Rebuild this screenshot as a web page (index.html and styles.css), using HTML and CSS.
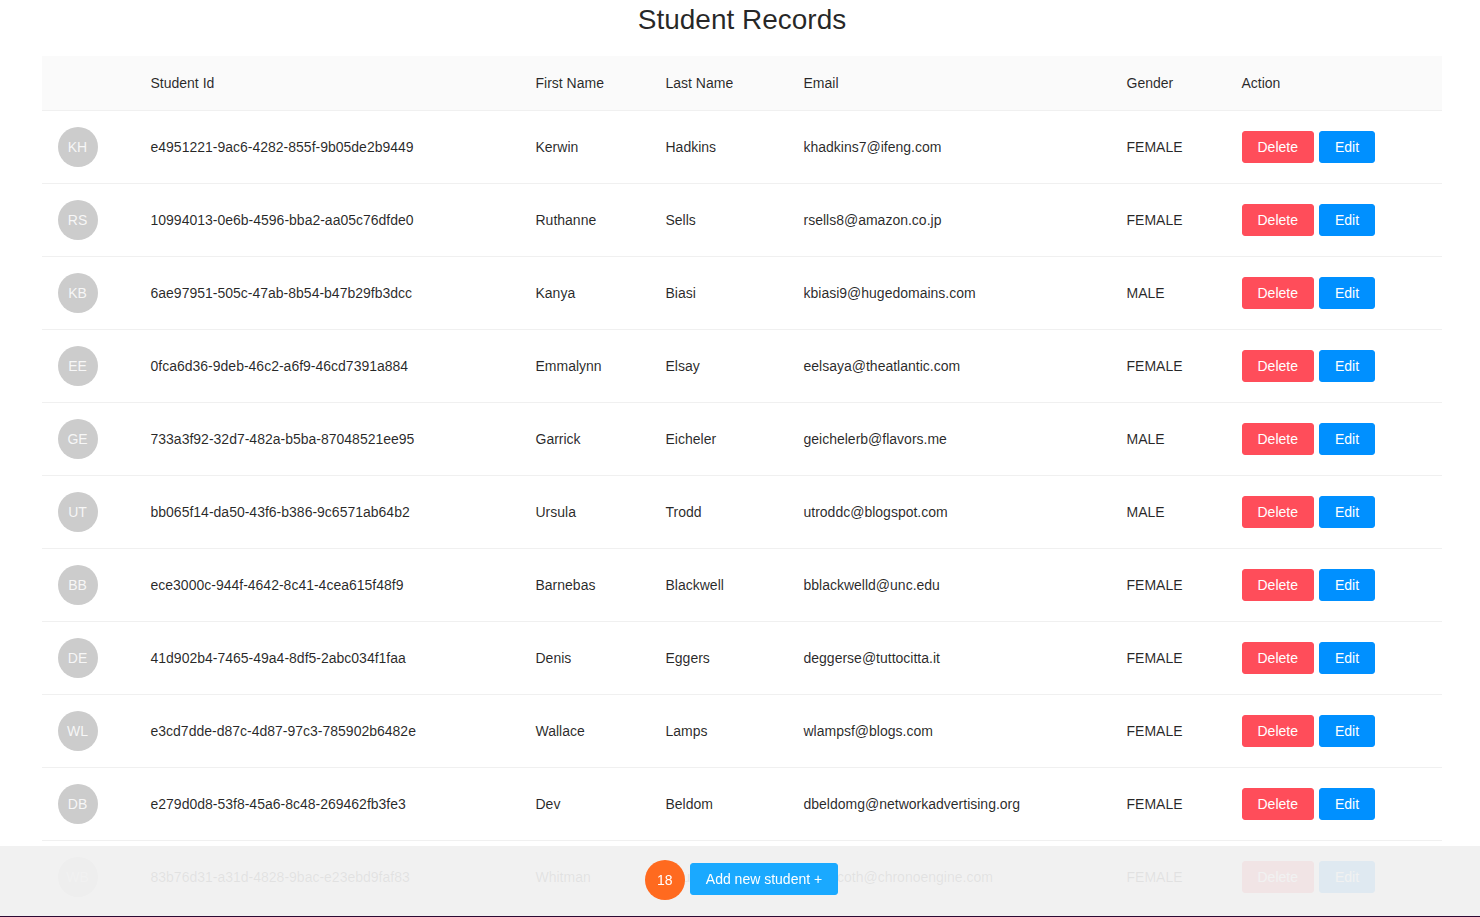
FILE: index.html
```html
<!DOCTYPE html>
<html lang="en">
  <head>
    <meta charset="UTF-8" />
    <title>Student Records</title>
    <link rel="stylesheet" href="styles.css">
  </head>
  <body>
    <h1 class="title">Student Records</h1>
    <table class="records">
      <colgroup>
        <col class="col-avatar" />
        <col class="col-id" />
        <col class="col-first" />
        <col class="col-last" />
        <col class="col-email" />
        <col class="col-gender" />
        <col class="col-action" />
      </colgroup>
      <thead>
        <tr>
          <th></th>
          <th>Student Id</th>
          <th>First Name</th>
          <th>Last Name</th>
          <th>Email</th>
          <th>Gender</th>
          <th>Action</th>
        </tr>
      </thead>
      <tbody>
        <tr>
          <td><span class="avatar">KH</span></td>
          <td>e4951221-9ac6-4282-855f-9b05de2b9449</td>
          <td>Kerwin</td>
          <td>Hadkins</td>
          <td>khadkins7@ifeng.com</td>
          <td>FEMALE</td>
          <td class="actions"><button class="btn btn-danger">Delete</button><button class="btn btn-primary">Edit</button></td>
        </tr>
        <tr>
          <td><span class="avatar">RS</span></td>
          <td>10994013-0e6b-4596-bba2-aa05c76dfde0</td>
          <td>Ruthanne</td>
          <td>Sells</td>
          <td>rsells8@amazon.co.jp</td>
          <td>FEMALE</td>
          <td class="actions"><button class="btn btn-danger">Delete</button><button class="btn btn-primary">Edit</button></td>
        </tr>
        <tr>
          <td><span class="avatar">KB</span></td>
          <td>6ae97951-505c-47ab-8b54-b47b29fb3dcc</td>
          <td>Kanya</td>
          <td>Biasi</td>
          <td>kbiasi9@hugedomains.com</td>
          <td>MALE</td>
          <td class="actions"><button class="btn btn-danger">Delete</button><button class="btn btn-primary">Edit</button></td>
        </tr>
        <tr>
          <td><span class="avatar">EE</span></td>
          <td>0fca6d36-9deb-46c2-a6f9-46cd7391a884</td>
          <td>Emmalynn</td>
          <td>Elsay</td>
          <td>eelsaya@theatlantic.com</td>
          <td>FEMALE</td>
          <td class="actions"><button class="btn btn-danger">Delete</button><button class="btn btn-primary">Edit</button></td>
        </tr>
        <tr>
          <td><span class="avatar">GE</span></td>
          <td>733a3f92-32d7-482a-b5ba-87048521ee95</td>
          <td>Garrick</td>
          <td>Eicheler</td>
          <td>geichelerb@flavors.me</td>
          <td>MALE</td>
          <td class="actions"><button class="btn btn-danger">Delete</button><button class="btn btn-primary">Edit</button></td>
        </tr>
        <tr>
          <td><span class="avatar">UT</span></td>
          <td>bb065f14-da50-43f6-b386-9c6571ab64b2</td>
          <td>Ursula</td>
          <td>Trodd</td>
          <td>utroddc@blogspot.com</td>
          <td>MALE</td>
          <td class="actions"><button class="btn btn-danger">Delete</button><button class="btn btn-primary">Edit</button></td>
        </tr>
        <tr>
          <td><span class="avatar">BB</span></td>
          <td>ece3000c-944f-4642-8c41-4cea615f48f9</td>
          <td>Barnebas</td>
          <td>Blackwell</td>
          <td>bblackwelld@unc.edu</td>
          <td>FEMALE</td>
          <td class="actions"><button class="btn btn-danger">Delete</button><button class="btn btn-primary">Edit</button></td>
        </tr>
        <tr>
          <td><span class="avatar">DE</span></td>
          <td>41d902b4-7465-49a4-8df5-2abc034f1faa</td>
          <td>Denis</td>
          <td>Eggers</td>
          <td>deggerse@tuttocitta.it</td>
          <td>FEMALE</td>
          <td class="actions"><button class="btn btn-danger">Delete</button><button class="btn btn-primary">Edit</button></td>
        </tr>
        <tr>
          <td><span class="avatar">WL</span></td>
          <td>e3cd7dde-d87c-4d87-97c3-785902b6482e</td>
          <td>Wallace</td>
          <td>Lamps</td>
          <td>wlampsf@blogs.com</td>
          <td>FEMALE</td>
          <td class="actions"><button class="btn btn-danger">Delete</button><button class="btn btn-primary">Edit</button></td>
        </tr>
        <tr>
          <td><span class="avatar">DB</span></td>
          <td>e279d0d8-53f8-45a6-8c48-269462fb3fe3</td>
          <td>Dev</td>
          <td>Beldom</td>
          <td>dbeldomg@networkadvertising.org</td>
          <td>FEMALE</td>
          <td class="actions"><button class="btn btn-danger">Delete</button><button class="btn btn-primary">Edit</button></td>
        </tr>
        <tr>
          <td><span class="avatar">WB</span></td>
          <td>83b76d31-a31d-4828-9bac-e23ebd9faf83</td>
          <td>Whitman</td>
          <td>Baucoth</td>
          <td>wbaucoth@chronoengine.com</td>
          <td>FEMALE</td>
          <td class="actions"><button class="btn btn-danger">Delete</button><button class="btn btn-primary">Edit</button></td>
        </tr>
      </tbody>
    </table>
    <div class="footer">
      <span class="count">18</span>
      <button class="btn btn-add">Add new student +</button>
    </div>
  </body>
</html>
```

FILE: styles.css
```css
html {
  height: 100%;
  overflow: hidden;
}

body {
  margin: 0;
  padding: 0 38px 0 42px;
  font: 14px "Liberation Sans", Arial, sans-serif;
  color: rgba(0, 0, 0, 0.85);
  background: #fff;
}

.title {
  margin: 0;
  height: 56px;
  padding-top: 2px;
  box-sizing: border-box;
  font-size: 28px;
  font-weight: 400;
  line-height: 36px;
  text-align: center;
}

.records {
  width: 1400px;
  table-layout: fixed;
  border-collapse: separate;
  border-spacing: 0;
}

.col-avatar {
  width: 92.5px;
}

.col-id {
  width: 385px;
}

.col-first {
  width: 130px;
}

.col-last {
  width: 138px;
}

.col-email {
  width: 323px;
}

.col-gender {
  width: 115px;
}

.col-action {
  width: 216.5px;
}

th,
td {
  padding: 0 16px;
  text-align: left;
  font-weight: 400;
  border-bottom: 1px solid #f0f0f0;
}

th {
  height: 54px;
  background: #fafafa;
}

td {
  height: 72px;
}

.avatar {
  display: flex;
  align-items: center;
  justify-content: center;
  width: 40px;
  height: 40px;
  padding-right: 1px;
  box-sizing: border-box;
  border-radius: 50%;
  background: #ccc;
  color: rgba(255, 255, 255, 0.85);
}

.btn {
  height: 32px;
  padding: 0 15px;
  border: 1px solid transparent;
  border-radius: 3px;
  font: inherit;
  color: #fff;
}

.btn-danger {
  margin-right: 5px;
  background: #ff4d5a;
  border-color: #ff4d5a;
}

.btn-primary {
  background: #0090ff;
  border-color: #0090ff;
}

.btn-add {
  margin-top: -3px;
  background: #1aa9ff;
  border-color: #1aa9ff;
}

.footer {
  position: fixed;
  left: 0;
  right: 0;
  bottom: 0;
  height: 71px;
  padding: 0 0 2px 3px;
  box-sizing: border-box;
  display: flex;
  align-items: center;
  justify-content: center;
  gap: 5px;
  background: rgba(240, 240, 240, 0.93);
  border-bottom: 1px solid #2d0a33;
}

.count {
  display: flex;
  align-items: center;
  justify-content: center;
  width: 40px;
  height: 40px;
  border-radius: 50%;
  background: #ff6a1f;
  color: #fff;
}
```
